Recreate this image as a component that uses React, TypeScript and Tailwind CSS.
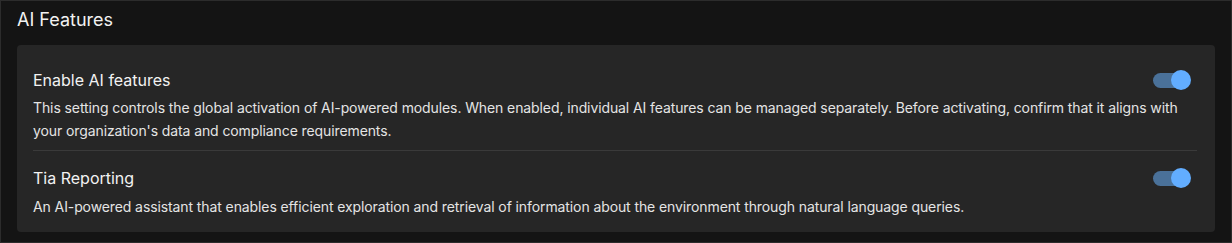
import React, { useState } from 'react';

type Feature = {
  id: string;
  title: string;
  description: string;
  gap: string;
};

const features: Feature[] = [
  {
    id: 'ai',
    title: 'Enable AI features',
    description:
      "This setting controls the global activation of AI-powered modules. When enabled, individual AI features can be managed separately. Before activating, confirm that it aligns with your organization's data and compliance requirements.",
    gap: 'mt-[5px]',
  },
  {
    id: 'tia',
    title: 'Tia Reporting',
    description:
      'An AI-powered assistant that enables efficient exploration and retrieval of information about the environment through natural language queries.',
    gap: 'mt-[6px]',
  },
];

const Toggle: React.FC<{ on: boolean; onChange: () => void }> = ({ on, onChange }) => (
  <button
    onClick={onChange}
    className="relative flex items-center w-[38px] h-[20px] shrink-0"
    aria-pressed={on}
  >
    <span className={`block w-[34px] h-[15px] rounded-full ${on ? 'bg-[#4a7199]' : 'bg-[#555]'}`} />
    <span
      className={`absolute top-0 w-[20px] h-[20px] rounded-full ${on ? 'right-0 bg-[#62adff]' : 'left-0 bg-[#bbb]'}`}
    />
  </button>
);

const App: React.FC = () => {
  const [state, setState] = useState<Record<string, boolean>>({ ai: true, tia: true });

  return (
    <div
      className="w-[1232px] h-[243px] bg-[#141414] border border-[#2c2c2c] px-4 pt-[7px] text-[#f2f2f2]"
      style={{ fontFamily: 'Inter, "Noto Sans", sans-serif' }}
    >
      <h2 className="text-[18px] leading-[24px] mb-[13px]">AI Features</h2>

      <div className="bg-[#262626] rounded-[4px] px-4 pt-[24px] pb-[14px]">
        {features.map((f, i) => (
          <div key={f.id}>
            {i > 0 && <div className="h-px bg-[#3a3a3a] mr-[2px] mt-[8px] mb-[16px]" />}
            <div className="flex items-center justify-between pr-[8px]">
              <span className="text-[16px] leading-[22px]">{f.title}</span>
              <Toggle on={state[f.id]} onChange={() => setState((s) => ({ ...s, [f.id]: !s[f.id] }))} />
            </div>
            <p className={`${f.gap} text-[14px] leading-[23px] tracking-[-0.1px] text-[#e4e4e4]`}>
              {f.description}
            </p>
          </div>
        ))}
      </div>
    </div>
  );
};

export default App;
